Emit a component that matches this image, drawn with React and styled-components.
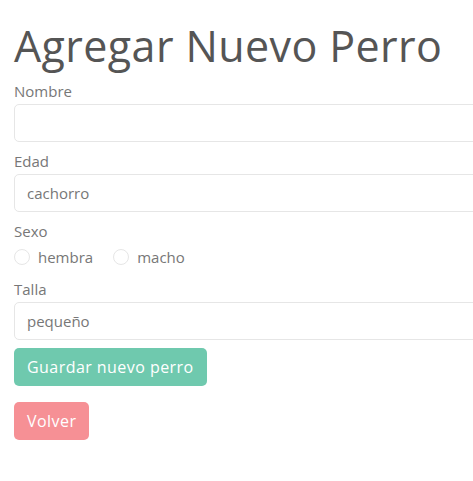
import React from "react";
import styled, { createGlobalStyle } from "styled-components";

const Global = createGlobalStyle`
  html, body { margin: 0; padding: 0; background: #fff; overflow: hidden; }
  body { font-family: "Open Sans", "Noto Sans", sans-serif; }
`;

const Page = styled.div`
  padding: 20px 14px;
  width: 540px;
`;

const Title = styled.h1`
  margin: 0 0 9px;
  font-family: "Open Sans", sans-serif;
  font-weight: 400;
  font-size: 43px;
  line-height: 52px;
  color: #555;
  letter-spacing: 0.4px;
`;

const Form = styled.form`
  display: flex;
  flex-direction: column;
`;

const Field = styled.div`
  display: flex;
  flex-direction: column;
  margin-bottom: ${(p) => p.$mb ?? 9}px;
`;

const Label = styled.label`
  font-size: 15px;
  line-height: 21px;
  color: #777;
  margin-bottom: 2px;
`;

const Input = styled.div`
  box-sizing: border-box;
  height: 38px;
  border: 1px solid #e6e6e6;
  border-radius: 5px;
  padding: 0 12px;
  display: flex;
  align-items: center;
  font-size: 15px;
  color: #777;
`;

const RadioRow = styled.div`
  display: flex;
  align-items: center;
  gap: 20px;
  height: 26px;
`;

const RadioOption = styled.span`
  display: flex;
  align-items: center;
  gap: 8px;
  font-size: 15px;
  color: #777;
`;

const Circle = styled.span`
  width: 16px;
  height: 16px;
  box-sizing: border-box;
  border: 1px solid #e6e6e6;
  border-radius: 50%;
`;

const Button = styled.button`
  align-self: flex-start;
  box-sizing: border-box;
  height: 38px;
  padding: 0 13px;
  border: none;
  border-radius: 5px;
  background: ${(p) => p.$bg};
  color: #fff;
  font-family: "Open Sans", sans-serif;
  font-size: 16px;
  letter-spacing: 0.45px;
  margin-bottom: ${(p) => p.$mb || 0}px;
`;

export default function App() {
  return (
    <Page>
      <Global />
      <Title>Agregar Nuevo Perro</Title>
      <Form>
        <Field>
          <Label>Nombre</Label>
          <Input />
        </Field>
        <Field>
          <Label>Edad</Label>
          <Input>cachorro</Input>
        </Field>
        <Field>
          <Label>Sexo</Label>
          <RadioRow>
            <RadioOption><Circle />hembra</RadioOption>
            <RadioOption><Circle />macho</RadioOption>
          </RadioRow>
        </Field>
        <Field $mb={8}>
          <Label>Talla</Label>
          <Input>pequeño</Input>
        </Field>
        <Button type="button" $bg="#6fc9ae" $mb={16}>Guardar nuevo perro</Button>
        <Button type="button" $bg="#f69095">Volver</Button>
      </Form>
    </Page>
  );
}
